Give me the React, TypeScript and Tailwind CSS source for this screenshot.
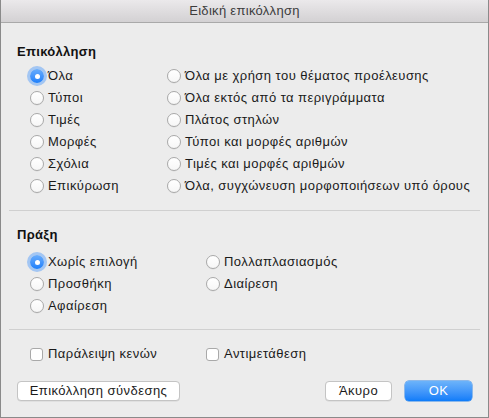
import { ReactNode } from "react";

function Radio({ checked, label }: { checked?: boolean; label: string }) {
  return (
    <div className="flex h-[22px] items-center">
      {checked ? (
        <span className="flex h-[14px] w-[14px] items-center justify-center rounded-full bg-gradient-to-b from-[#67acfc] to-[#1b7ffb] shadow-[0_0_0_3px_rgba(90,160,250,0.5)]">
          <span className="h-[5px] w-[5px] rounded-full bg-white" />
        </span>
      ) : (
        <span className="h-[14px] w-[14px] rounded-full border border-[#a9a9a9] bg-gradient-to-b from-white to-[#f6f6f6] shadow-[0_0.5px_0.5px_rgba(0,0,0,0.08)]" />
      )}
      <span className="ml-[4px] text-[13px] tracking-[0.45px] text-[#1a1a1a]">{label}</span>
    </div>
  );
}

function Check({ label }: { label: string }) {
  return (
    <div className="flex h-[22px] items-center">
      <span className="h-[13px] w-[13px] rounded-[3px] border border-[#a9a9a9] bg-white" />
      <span className="ml-[5px] text-[13px] tracking-[0.45px] text-[#1a1a1a]">{label}</span>
    </div>
  );
}

function Button({ children, primary, className }: { children: ReactNode; primary?: boolean; className?: string }) {
  return (
    <div
      className={
        "flex h-[20px] items-center justify-center rounded-[4px] text-[13px] tracking-[0.45px] " +
        (primary
          ? "bg-gradient-to-b from-[#6cb3fa] to-[#0c7cf9] text-white shadow-[0_0_0_0.5px_#2d84e8] "
          : "border border-[#c4c4c4] bg-white text-[#1a1a1a] shadow-[0_0.5px_0.5px_rgba(0,0,0,0.1)] ") +
        (className ?? "")
      }
    >
      {children}
    </div>
  );
}

export default function App() {
  return (
    <div
      className="flex h-[418px] w-[489px] flex-col border border-t-0 border-[#8a8a8a] bg-[#ececec]"
      style={{ fontFamily: '"Liberation Sans", "Noto Sans", Arial, sans-serif' }}
    >
      <div className="flex h-[23px] shrink-0 items-center justify-center border-b border-[#a9a9a9] bg-gradient-to-b from-[#ebe9eb] to-[#d3d1d3] text-[13px] tracking-[0.3px] text-[#3c3c3c]">
        Ειδική επικόλληση
      </div>

      <div className="px-[16px] pt-[21px]">
        <div className="h-[16px] text-[13px] font-bold leading-[16px] tracking-[0.3px] text-[#111]">Επικόλληση</div>
        <div className="mt-[5px] flex pl-[13px]">
          <div className="w-[137px]">
            <Radio checked label="Όλα" />
            <Radio label="Τύποι" />
            <Radio label="Τιμές" />
            <Radio label="Μορφές" />
            <Radio label="Σχόλια" />
            <Radio label="Επικύρωση" />
          </div>
          <div>
            <Radio label="Όλα με χρήση του θέματος προέλευσης" />
            <Radio label="Όλα εκτός από τα περιγράμματα" />
            <Radio label="Πλάτος στηλών" />
            <Radio label="Τύποι και μορφές αριθμών" />
            <Radio label="Τιμές και μορφές αριθμών" />
            <Radio label="Όλα, συγχώνευση μορφοποιήσεων υπό όρους" />
          </div>
        </div>
      </div>

      <div className="mx-[8px] mt-[13px] h-px bg-[#d0d0d0]" />

      <div className="px-[16px] pt-[16px]">
        <div className="h-[16px] text-[13px] font-bold leading-[16px] tracking-[0.3px] text-[#111]">Πράξη</div>
        <div className="mt-[8px] flex pl-[13px]">
          <div className="w-[176px]">
            <Radio checked label="Χωρίς επιλογή" />
            <Radio label="Προσθήκη" />
            <Radio label="Αφαίρεση" />
          </div>
          <div>
            <Radio label="Πολλαπλασιασμός" />
            <Radio label="Διαίρεση" />
          </div>
        </div>
      </div>

      <div className="mx-[8px] mt-[12px] h-px bg-[#d0d0d0]" />

      <div className="mt-[13px] flex pl-[29px]">
        <div className="w-[176px]">
          <Check label="Παράλειψη κενών" />
        </div>
        <Check label="Αντιμετάθεση" />
      </div>

      <div className="mt-[16px] flex items-center px-[16px]">
        <Button className="w-[163px]">Επικόλληση σύνδεσης</Button>
        <div className="flex-1" />
        <Button className="w-[67px]">Άκυρο</Button>
        <Button primary className="ml-[13px] w-[67px]">
          OK
        </Button>
      </div>
    </div>
  );
}
